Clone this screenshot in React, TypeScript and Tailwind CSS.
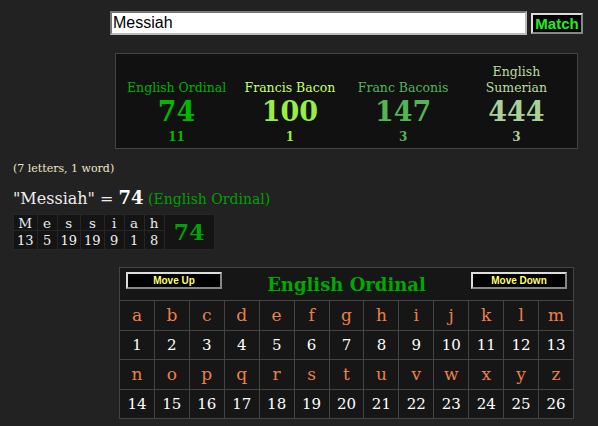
const serif = "font-['DejaVu_Serif',serif]";
const sans = "font-['Liberation_Sans',Arial,sans-serif]";

const ciphers = [
  { label: "English Ordinal", value: 74, count: 11, labelColor: "text-[#00b000]", valueColor: "text-[#00b800]", countColor: "text-[#00b800]" },
  { label: "Francis Bacon", value: 100, count: 1, labelColor: "text-[#c8ff70]", valueColor: "text-[#99ee44]", countColor: "text-[#99ee44]" },
  { label: "Franc Baconis", value: 147, count: 3, labelColor: "text-[#55b455]", valueColor: "text-[#55b455]", countColor: "text-[#55b455]" },
  { label: "English Sumerian", value: 444, count: 3, labelColor: "text-[#bcdca0]", valueColor: "text-[#aad098]", countColor: "text-[#aad098]" },
];

const word = [
  ["M", 13],
  ["e", 5],
  ["s", 19],
  ["s", 19],
  ["i", 9],
  ["a", 1],
  ["h", 8],
] as const;

const alphabet = "abcdefghijklmnopqrstuvwxyz".split("");

function OldButton({ children, className }: { children: React.ReactNode; className?: string }) {
  return (
    <button
      className={`bg-black border-2 border-t-[#ddd] border-l-[#ddd] border-b-[#888] border-r-[#888] ${sans} font-bold ${className ?? ""}`}
    >
      {children}
    </button>
  );
}

export default function App() {
  const rows = [alphabet.slice(0, 13), alphabet.slice(13)];

  return (
    <div className="w-full min-h-[426px] bg-[#222222] overflow-hidden">
      {/* search row */}
      <div className="flex items-start pt-[11px] pl-[110px]">
        <input
          defaultValue="Messiah"
          className={`w-[417px] h-[24px] bg-white border-2 border-t-[#777] border-l-[#777] border-b-[#bbb] border-r-[#bbb] px-[1px] text-[16px] text-black ${sans} outline-none`}
        />
        <OldButton className="ml-[4px] mt-[2px] w-[52px] h-[21px] text-[15px] leading-none text-[#22ee22]">Match</OldButton>
      </div>

      {/* cipher summary */}
      <div className={`ml-[115px] mt-[18px] w-[463px] h-[96px] border border-[#444] bg-[#111] grid grid-cols-4 px-[4px] ${serif}`}>
        {ciphers.map((c) => (
          <div key={c.label} className="flex flex-col items-center">
            <div className={`h-[42px] flex items-end text-center text-[12.5px] leading-[16px] ${c.labelColor}`}>
              <span className={c.label === "English Sumerian" ? "w-[72px]" : ""}>{c.label}</span>
            </div>
            <div className={`mt-[1px] text-[27px] leading-[30px] font-bold ${c.valueColor}`}>{c.value}</div>
            <div className={`mt-[2px] text-[12px] leading-[16px] font-bold ${c.countColor}`}>{c.count}</div>
          </div>
        ))}
      </div>

      {/* word breakdown */}
      <div className={`pl-[13px] ${serif}`}>
        <div className="mt-[13px] text-[11px] leading-[14px] text-[#efe6c6]">(7 letters, 1 word)</div>
        <div className="mt-[11px] flex items-baseline leading-[22px] whitespace-pre">
          <span className="text-[16px] text-[#eeeeee]">"Messiah" = </span>
          <span className="text-[18px] font-bold text-white">74</span>
          <span className="text-[14px] text-[#00a000]"> (English Ordinal)</span>
        </div>
        <table className="mt-[4px] border-collapse bg-[#141414]">
          <tbody>
            <tr>
              {word.map(([l], i) => (
                <td key={i} className="min-w-[20px] px-[3px] h-[16px] border border-[#262626] text-center text-[13.5px] leading-[14px] text-[#e4ecf4]">
                  {l}
                </td>
              ))}
              <td rowSpan={2} className="w-[50px] border border-[#262626] text-center text-[22px] font-bold text-[#00a400]">
                74
              </td>
            </tr>
            <tr>
              {word.map(([, n], i) => (
                <td key={i} className="min-w-[20px] px-[3px] h-[19px] border border-[#262626] text-center text-[13px] leading-[15px] text-[#f0f0f0]">
                  {n}
                </td>
              ))}
            </tr>
          </tbody>
        </table>
      </div>

      {/* cipher chart */}
      <table className={`ml-[119px] mt-[17px] w-[455px] border-collapse bg-[#161616] table-fixed ${serif}`}>
        <tbody>
          <tr>
            <td colSpan={13} className="h-[33px] border border-[#444] align-top">
              <div className="flex items-start justify-between px-[6px] pt-[4px]">
                <OldButton className="w-[96px] h-[17px] text-[10px] leading-none text-[#ffff70]">Move Up</OldButton>
                <span className="text-[18px] font-bold text-[#00a800] leading-[20px] mt-[3px]">English Ordinal</span>
                <OldButton className="w-[96px] h-[17px] text-[10px] leading-none text-[#ffff70]">Move Down</OldButton>
              </div>
            </td>
          </tr>
          {rows.map((row, r) => (
            <>
              <tr key={`l${r}`}>
                {row.map((ch) => (
                  <td key={ch} className="h-[30px] border border-[#444] text-center text-[17px] text-[#ec8048]">
                    {ch}
                  </td>
                ))}
              </tr>
              <tr key={`n${r}`}>
                {row.map((ch) => (
                  <td key={ch} className="h-[29px] border border-[#444] text-center text-[15px] text-white">
                    {ch.charCodeAt(0) - 96}
                  </td>
                ))}
              </tr>
            </>
          ))}
        </tbody>
      </table>
    </div>
  );
}
